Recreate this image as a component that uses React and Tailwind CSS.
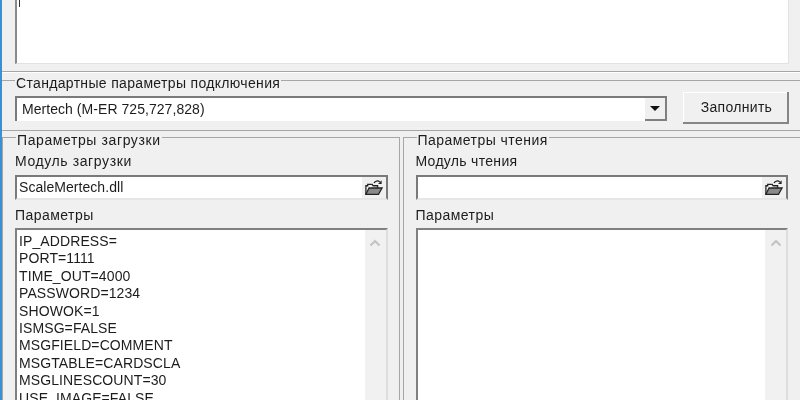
import React from "react";

const font = "font-['Liberation_Sans',sans-serif] text-[14px] leading-[17px] text-[#1c1c1c]";

const loadParams = [
  "IP_ADDRESS=",
  "PORT=1111",
  "TIME_OUT=4000",
  "PASSWORD=1234",
  "SHOWOK=1",
  "ISMSG=FALSE",
  "MSGFIELD=COMMENT",
  "MSGTABLE=CARDSCLA",
  "MSGLINESCOUNT=30",
  "USE_IMAGE=FALSE",
];

const FolderIcon = () => (
  <svg width="20" height="18" viewBox="0 0 22 20" fill="none">
    <path d="M2 17V7.5h2V6h5l1 1.5h5V10" stroke="#222" strokeWidth="1.4" fill="#f3f3f3" />
    <path d="M2 17l3.5-7H20l-4 7H2z" fill="#8a8a8a" stroke="#222" strokeWidth="1.4" />
    <path d="M11 4.5c1.5-2.5 4-3 6.5-1.5" stroke="#222" strokeWidth="1.4" />
    <path d="M19.5 1.5v4h-4z" fill="#222" />
  </svg>
);

const Chevron = () => (
  <svg width="12" height="8" viewBox="0 0 12 8" fill="none">
    <path d="M1.5 6.5L6 2l4.5 4.5" stroke="#c4c4c4" strokeWidth="2.2" />
  </svg>
);

const Panel = ({ title, titleClass, moduleLabel, labelClass, moduleValue, lines, className }) => (
  <fieldset className={`min-w-0 flex-1 border-t border-l border-[#a6a6a6] ${className}`}>
    <legend className={`ml-[13px] h-[10px] px-[1px] ${titleClass}`}>{title}</legend>
    <div className="pl-[12px]">
      <div className={`mt-[11px] ${labelClass}`}>{moduleLabel}</div>
      <div className="mt-[5px] flex h-[25px] items-center justify-between border-2 border-[#7a7a7a] border-b-[#e6e6e6] bg-white pl-[2px]">
        <span className="tracking-[0.05px]">{moduleValue}</span>
        <span className="flex h-full w-[24px] items-center justify-center bg-[#f0f0f0]">
          <FolderIcon />
        </span>
      </div>
      <div className="mt-[7px] tracking-[0.45px]">Параметры</div>
      <div className="mt-[4px] flex h-[180px] border-2 border-[#808080] border-r-[#dddddd] bg-white">
        <div className="flex-1 pl-[2px] pt-[3px] leading-[17.4px] tracking-[0.1px]">
          {lines.map((line) => (
            <div key={line}>{line}</div>
          ))}
        </div>
        <div className="flex w-[21px] justify-center bg-[#f1f1f1] pt-[9px]">
          <div className="h-[8px]">
            <Chevron />
          </div>
        </div>
      </div>
    </div>
  </fieldset>
);

export default function App() {
  return (
    <div className={`flex h-[400px] w-[800px] overflow-hidden bg-[#f0f0f0] blur-[0.3px] ${font}`}>
      <div className="w-[2px] shrink-0 bg-[#3b8fd3]" />
      <div className="flex min-w-0 flex-1 flex-col">
        <div className="h-[71px] shrink-0 pl-[13px] pr-[11px]">
          <div className="h-[64px] border-l-2 border-[#8a8a8a] border-r border-r-[#e2e2e2] border-b border-b-[#e2e2e2] bg-white pl-[2px]">
            <div className="h-[7px] w-[1px] bg-[#333333]" />
          </div>
        </div>

        <div className="shrink-0 border-t border-[#a6a6a6]">
          <div className="h-[1px] bg-white" />
        </div>

        <fieldset className="mt-[2px] h-[56px] shrink-0 border-t border-b border-[#a6a6a6]">
          <legend className="ml-[13px] h-[10px] px-[1px] tracking-[0.33px]">Стандартные параметры подключения</legend>
          <div className="mt-[7px] flex items-center pl-[13px] pr-[11px]">
            <div className="flex h-[25px] w-[652px] items-center justify-between border-t-2 border-l-2 border-[#7a7a7a] bg-white pl-[5px]">
              <span className="pt-[1px] tracking-[0.05px]">Mertech (M-ER 725,727,828)</span>
              <span className="flex h-full w-[22px] items-center justify-center border-r-2 border-b-2 border-[#808080] bg-[#f0f0f0]">
                <span className="h-0 w-0 border-x-[5px] border-t-[5px] border-x-transparent border-t-[#111111]" />
              </span>
            </div>
            <button className="ml-[16px] h-[32px] w-[106px] border-r-2 border-b-2 border-[#858585] bg-[#f0f0f0] pl-[3px] pt-[1px] tracking-[0.3px] shadow-[inset_1px_1px_0_#ffffff]">
              Заполнить
            </button>
          </div>
        </fieldset>

        <div className="mt-[1px] flex min-h-0 flex-1 gap-[3px]">
          <Panel
            title="Параметры загрузки"
            titleClass="tracking-[0.6px]"
            moduleLabel="Модуль загрузки"
            labelClass="tracking-[0.6px]"
            moduleValue="ScaleMertech.dll"
            lines={loadParams}
            className="border-r pr-[11px]"
          />
          <Panel
            title="Параметры чтения"
            titleClass="tracking-[0.45px]"
            moduleLabel="Модуль чтения"
            labelClass="tracking-[0.3px]"
            moduleValue=""
            lines={[]}
            className="pr-[12px]"
          />
        </div>
      </div>
    </div>
  );
}
